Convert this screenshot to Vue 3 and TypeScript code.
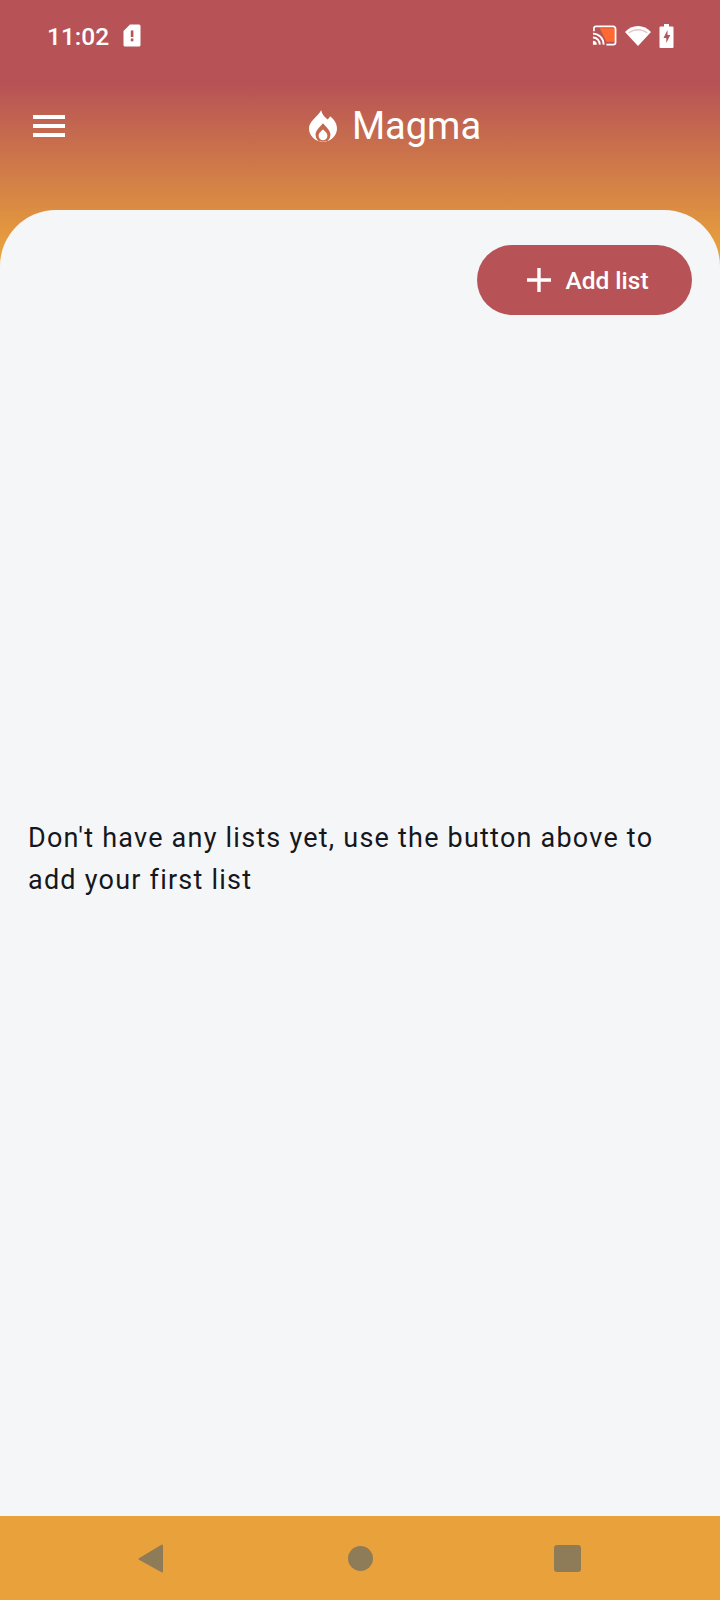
<script setup lang="ts">
const title: string = 'Magma'
</script>

<template>
  <div class="screen">
    <header class="top">
      <div class="status">
        <div class="status-left">
          <span class="time">11:02</span>
          <svg class="sim" width="18" height="23" viewBox="0 0 18 23">
            <path d="M7 .5h9a1.500 1.500 0 0 1 1.500 1.500v19a1.500 1.500 0 0 1-1.500 1.500H2A1.500 1.500 0 0 1 .5 21V7z" fill="#fff" />
            <rect x="7.800" y="6.500" width="2.600" height="6.500" fill="#b75356" />
            <rect x="7.800" y="14.500" width="2.600" height="2.800" fill="#b75356" />
          </svg>
        </div>
        <div class="status-right">
          <svg width="25" height="22" viewBox="0 0 26 22">
            <path d="M8 3h16v14h-9" fill="#ff6a33" />
            <path d="M2 6V3a2 2 0 0 1 2-2h18a2.500 2.500 0 0 1 2.500 2.500v14a2.500 2.500 0 0 1-2.500 2.500h-7" fill="none" stroke="#fff" stroke-width="1.800" />
            <path d="M1 8.500a11 11 0 0 1 11 11.500M1 12.500a7 7 0 0 1 7 7.500" fill="none" stroke="#fff" stroke-width="2" />
            <path d="M1 16a4 4 0 0 1 4 4H1z" fill="#fff" />
          </svg>
          <svg width="28" height="22" viewBox="0 0 28 22">
            <path d="M14 21 1 7C4.500 3 9 1 14 1s9.500 2 13 6z" fill="#fff" />
            <path d="M14 5.500c-3.500 0-6.500 1.100-8.800 3l-.9-1C7 5.200 10.500 4 14 4s7 1.200 9.700 3.500l-.9 1c-2.300-1.900-5.300-3-8.800-3z" fill="#e8c4c4" />
          </svg>
          <svg width="15" height="24" viewBox="0 0 15 24">
            <path d="M5 0h5v2.500h3.500a1 1 0 0 1 1 1V23a1 1 0 0 1-1 1H1.500a1 1 0 0 1-1-1V3.500a1 1 0 0 1 1-1H5z" fill="#fff" />
            <path d="M8.500 6 4.500 14h2.800v5l4-8H8.500z" fill="#b75356" />
          </svg>
        </div>
      </div>
      <div class="appbar">
        <button class="menu" aria-label="Menu">
          <span></span><span></span><span></span>
        </button>
        <div class="brand">
          <svg width="28" height="32" viewBox="0 0 30 34">
            <path fill-rule="evenodd" d="M13 0c1 4.500 3.500 7 7 10 1-1 2-2 2.500-3.500C27 10 30 14.500 30 19.500 30 27.500 23.500 34 15 34S0 27.500 0 19.500C0 11.500 9 7.500 13 0zM15 14c-2 3-8 7-8 12.500a8 8 0 0 0 16 0C23 21 17 17 15 14z" fill="#fff" />
            <path d="M15 20.500c-1.300 1.800-4.700 3.500-4.700 7a4.700 4.700 0 0 0 9.400 0c0-3.500-3.400-5.200-4.700-7z" fill="#fff" />
          </svg>
          <span class="title">{{ title }}</span>
        </div>
      </div>
    </header>

    <main class="card">
      <div class="actions">
        <button class="add">
          <svg width="26" height="26" viewBox="0 0 26 26">
            <path d="M13 1v24M1 13h24" stroke="#fff" stroke-width="3.400" fill="none" />
          </svg>
          <span>Add list</span>
        </button>
      </div>
      <div class="empty">
        <p>Don't have any lists yet, use the button above to add your first list</p>
      </div>
    </main>

    <nav class="nav">
      <svg width="26" height="30" viewBox="0 0 26 30">
        <path d="M25 1.500V27.500a1 1 0 0 1-1.500.8L1 15.800a1 1 0 0 1 0-1.600L23.500.7a1 1 0 0 1 1.500.8z" fill="#8e7b58" />
      </svg>
      <span class="circle"></span>
      <span class="square"></span>
    </nav>
  </div>
</template>

<style>
html, body { margin: 0; background: #f5f6f8; }
</style>

<style scoped>
.screen {
  width: 720px;
  height: 1600px;
  display: flex;
  flex-direction: column;
  background: #f5f6f8;
  font-family: Roboto, "Liberation Sans", sans-serif;
  overflow: hidden;
}
.top {
  height: 270px;
  margin-bottom: -60px;
  flex: none;
  background: linear-gradient(180deg, #b75356 0, #b75356 85px, #e9a23b 255px);
  display: flex;
  flex-direction: column;
}
.status {
  height: 72px;
  padding: 0 46px 0 47px;
  display: flex;
  align-items: center;
  justify-content: space-between;
}
.status-left, .status-right { display: flex; align-items: center; }
.time { color: #fff; font-size: 24.500px; font-weight: 500; margin-right: 14px; }
.sim { margin-top: -1px; }
.status-right { gap: 7px; }
.appbar {
  position: relative;
  height: 54px;
  margin-top: 27px;
  display: flex;
  align-items: center;
  justify-content: center;
}
.menu {
  position: absolute;
  left: 33px;
  top: 16px;
  width: 32px;
  padding: 0;
  border: 0;
  background: none;
  display: flex;
  flex-direction: column;
  gap: 5px;
}
.menu span { height: 4px; background: #fff; display: block; }
.brand { display: flex; align-items: center; gap: 15px; margin-left: 70px; }
.title { color: #fff; font-size: 38px; }
.card {
  flex: 1;
  position: relative;
  background: #f5f6f8;
  border-radius: 56px 56px 0 0;
  display: flex;
  flex-direction: column;
}
.actions {
  display: flex;
  justify-content: flex-end;
  padding: 35px 28px 0 0;
}
.add {
  width: 215px;
  height: 70px;
  border: 0;
  border-radius: 35px;
  background: #b75356;
  color: #fff;
  font: 500 24.500px Roboto, "Liberation Sans", sans-serif;
  display: flex;
  align-items: center;
  justify-content: center;
  gap: 13px;
  padding: 0 0 0 6px;
}
.empty {
  flex: 1;
  display: flex;
  align-items: center;
  padding: 0 28px 112px;
  margin-top: -2px;
}
.empty p {
  margin: 0;
  color: #15171c;
  font-size: 27px;
  line-height: 42px;
  letter-spacing: 1.220px;
}
.nav {
  height: 84px;
  flex: none;
  background: #e9a23b;
  display: flex;
  align-items: center;
  justify-content: center;
  position: relative;
}
.nav svg, .circle, .square { position: absolute; }
.nav svg { left: 138px; top: 28px; }
.circle { left: 348px; top: 30px; width: 25px; height: 25px; border-radius: 50%; background: #8e7b58; }
.square { left: 554px; top: 29px; width: 27px; height: 27px; border-radius: 3px; background: #8e7b58; }
</style>
